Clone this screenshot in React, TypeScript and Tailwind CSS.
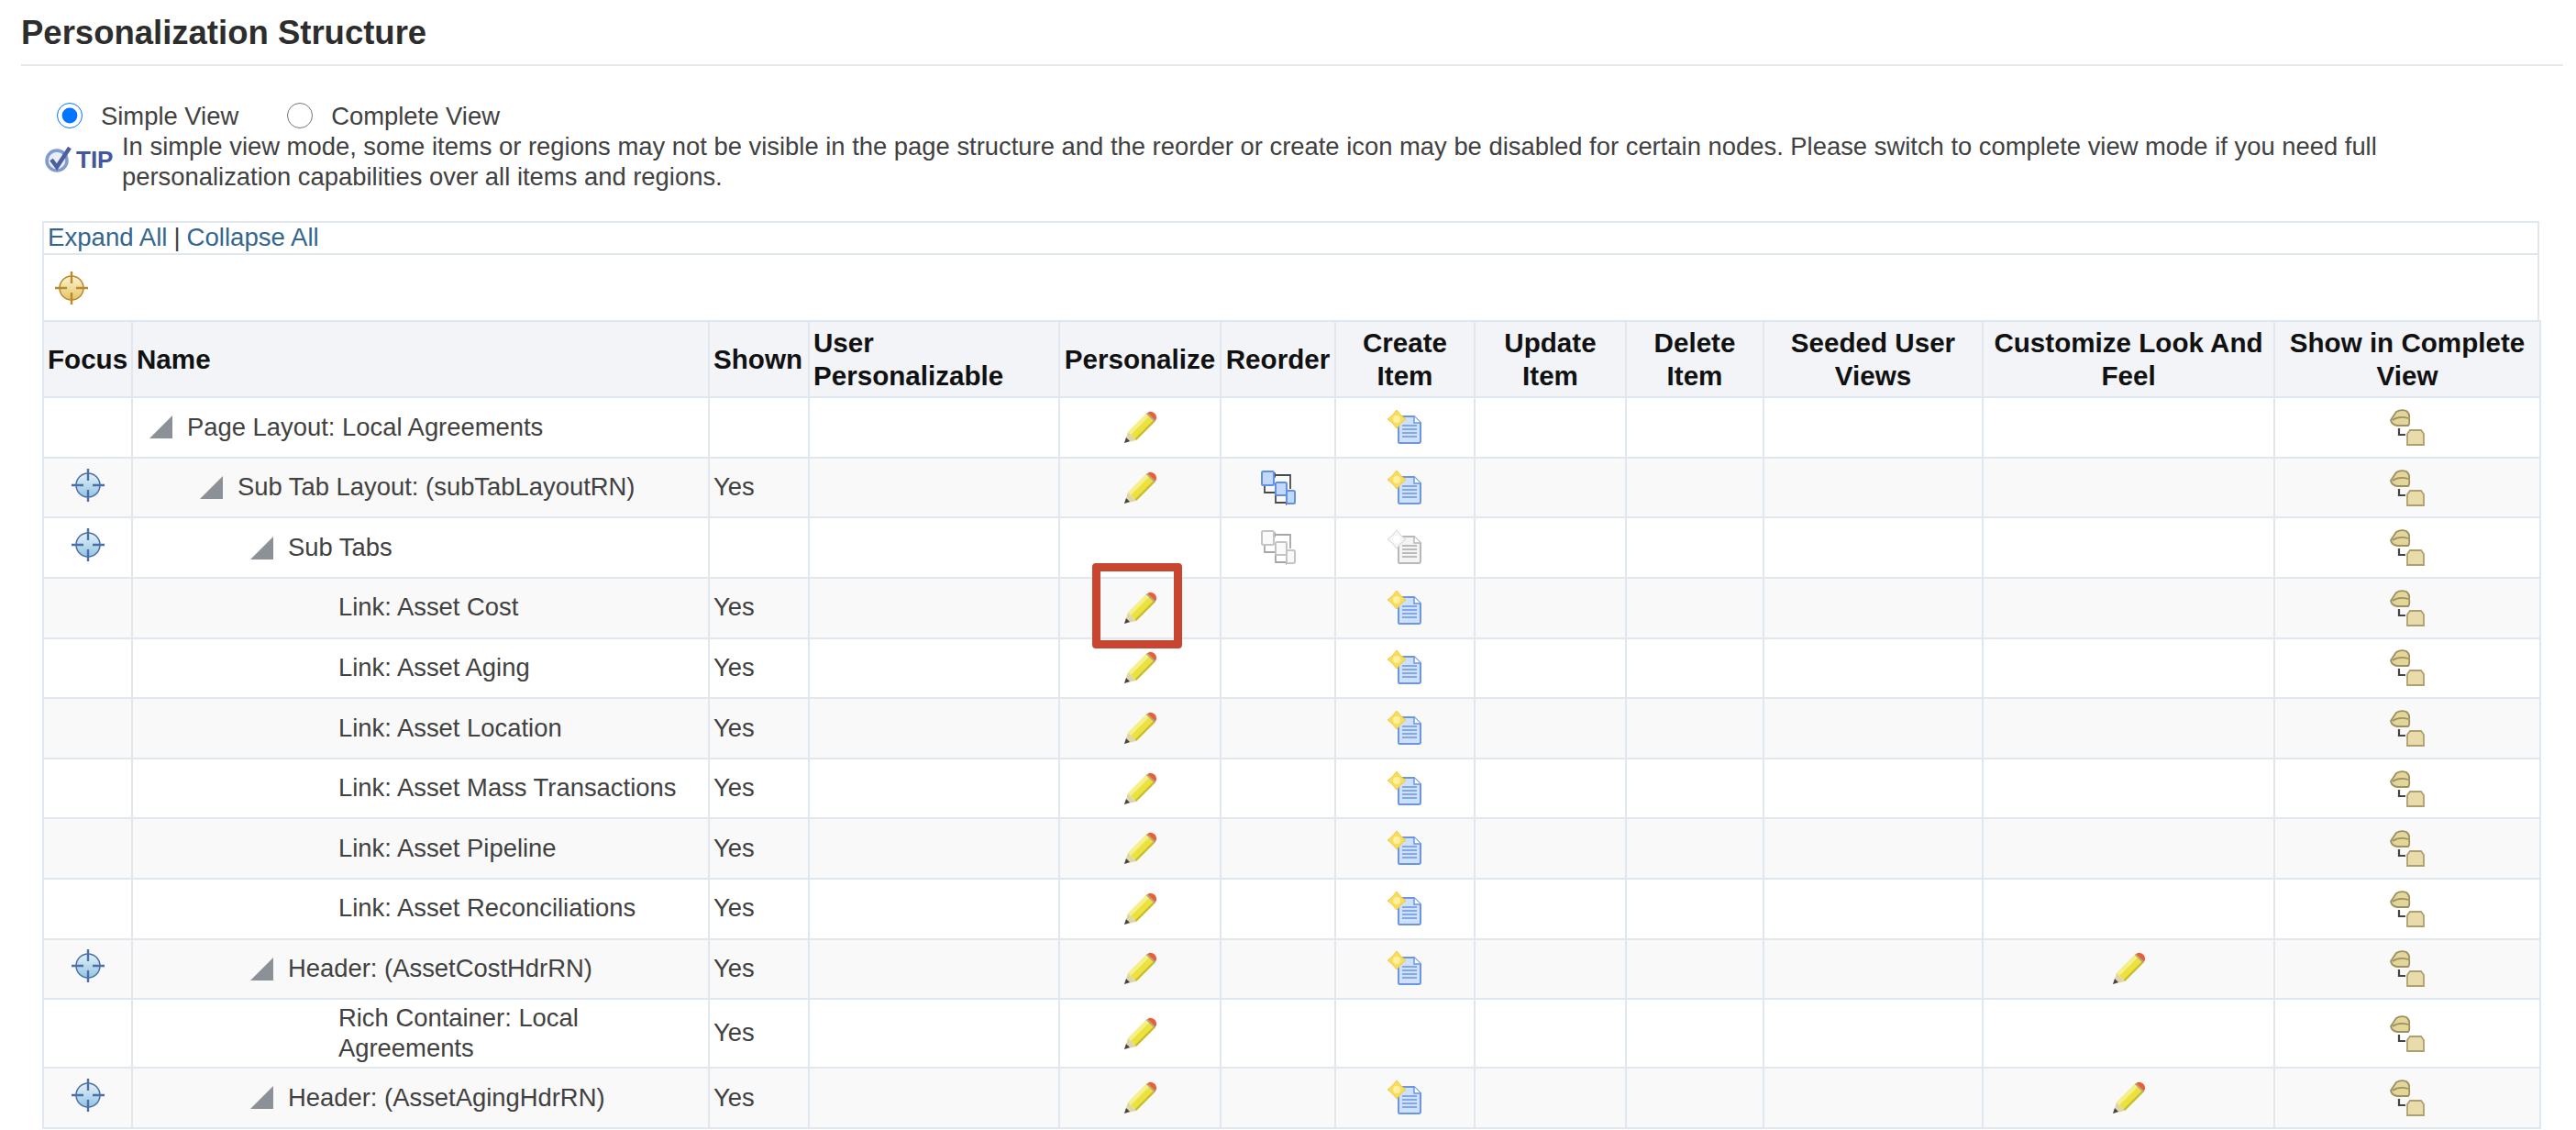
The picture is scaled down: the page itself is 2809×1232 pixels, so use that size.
const rows = [
  { name: "Page Layout: Local Agreements", level: 0, tree: true, focus: false, shown: "", edit: true, reorder: "", create: "on", look: false },
  { name: "Sub Tab Layout: (subTabLayoutRN)", level: 1, tree: true, focus: true, shown: "Yes", edit: true, reorder: "on", create: "on", look: false },
  { name: "Sub Tabs", level: 2, tree: true, focus: true, shown: "", edit: false, reorder: "off", create: "off", look: false },
  { name: "Link: Asset Cost", level: 3, tree: false, focus: false, shown: "Yes", edit: true, reorder: "", create: "on", look: false, marked: true },
  { name: "Link: Asset Aging", level: 3, tree: false, focus: false, shown: "Yes", edit: true, reorder: "", create: "on", look: false },
  { name: "Link: Asset Location", level: 3, tree: false, focus: false, shown: "Yes", edit: true, reorder: "", create: "on", look: false },
  { name: "Link: Asset Mass Transactions", level: 3, tree: false, focus: false, shown: "Yes", edit: true, reorder: "", create: "on", look: false },
  { name: "Link: Asset Pipeline", level: 3, tree: false, focus: false, shown: "Yes", edit: true, reorder: "", create: "on", look: false },
  { name: "Link: Asset Reconciliations", level: 3, tree: false, focus: false, shown: "Yes", edit: true, reorder: "", create: "on", look: false },
  { name: "Header: (AssetCostHdrRN)", level: 2, tree: true, focus: true, shown: "Yes", edit: true, reorder: "", create: "on", look: true },
  { name: "Rich Container: Local Agreements", level: 3, tree: false, focus: false, shown: "Yes", edit: true, reorder: "", create: "", look: false },
  { name: "Header: (AssetAgingHdrRN)", level: 2, tree: true, focus: true, shown: "Yes", edit: true, reorder: "", create: "on", look: true },
];

const indent = ["pl-[18px]", "pl-[73px]", "pl-[128px]", "pl-[183px]"];

function Pencil() {
  return (
    <svg width="37" height="36" viewBox="0 0 37 36" className="inline-block">
      <path d="M5 23 L25 3 L34 12 L14 32 Z" fill="#ece23f" />
      <path d="M5 23 L25 3 L28 6 L8 26 Z" fill="#f6f08a" />
      <path d="M14 32 L34 12 L32.500 10.500 L12.500 30.500 Z" fill="#c6ba30" />
      <path d="M5 23 L14 32 L1 35 Z" fill="#ded6a8" />
      <path d="M3 29 L7 33 L1 35 Z" fill="#444" />
      <path d="M25 3 L28 1 Q31 0 34.500 3 Q37 6.500 35.500 9.500 L34 12 Z" fill="#ea5f38" />
      <path d="M25 3 L34 12 L35 10.500 L26.500 2 Z" fill="#b3ab82" />
    </svg>
  );
}

function Create({ off = false }: { off?: boolean }) {
  const sheet = off ? "#f4f4f4" : "#cfe0fa";
  const edge = off ? "#b8b8b8" : "#6a97e0";
  const line = off ? "#a8a8a8" : "#6a97e0";
  return (
    <svg width="38" height="38" viewBox="0 0 38 38" className="inline-block">
      <path d="M12 7 H29 L36 14 V34 Q36 36 34 36 H13 Q12 36 12 34 Z" fill={sheet} stroke={edge} strokeWidth="2" />
      <path d="M29 7 V14 H36" fill="#fff" stroke={edge} strokeWidth="1.500" />
      <path d="M16 17 H32 M16 21 H32 M16 25 H32 M16 29 H32" stroke={line} strokeWidth="1.600" />
      <path d="M10 0 L15 6 L20 10 L15 14 L10 20 L5 14 L0 10 L5 6 Z" fill={off ? "#f6f6f6" : "#f8dc5a"} stroke={off ? "#d4d4d4" : "#f3cb3c"} />
      <circle cx="10" cy="10" r="4" fill={off ? "#fff" : "#fdf0a0"} />
    </svg>
  );
}

function Reorder({ off = false }: { off?: boolean }) {
  const fill = off ? "#fafafa" : "#c3d8fa";
  const edge = off ? "#c4c4c4" : "#5f92e2";
  const wire = off ? "#a6a6a6" : "#4a4a4a";
  return (
    <svg width="38" height="38" viewBox="0 0 38 38" className="inline-block">
      <path d="M16 5 H32 V20 M4 17 V24 H15 M16 24 V35 H27" fill="none" stroke={wire} strokeWidth="1.800" />
      <path d="M16 2 V8 L12 5 Z M15 21 V27 L19 24 Z M27 32 V38 L31 35 Z" fill={wire} />
      <rect x="1" y="1" width="13" height="15" rx="1.500" fill={fill} stroke={edge} strokeWidth="2" />
      <rect x="16" y="13" width="12" height="14" rx="1.500" fill={fill} stroke={edge} strokeWidth="2" />
      <rect x="28" y="22" width="9" height="14" rx="1.500" fill={fill} stroke={edge} strokeWidth="2" />
    </svg>
  );
}

function ShowIcon() {
  return (
    <svg width="38" height="40" viewBox="0 0 38 40" className="inline-block">
      <path d="M1 12 L7 3 Q12 0 18 2 Q22 5 21 10 Q22 16 20 18 H8 Q2 17 1 12 Z" fill="#e3d69a" stroke="#9e9060" strokeWidth="1.800" />
      <path d="M3 12 Q10 7 20 10" fill="none" stroke="#9e9060" strokeWidth="1.800" />
      <path d="M10 21 V28 H17" fill="none" stroke="#444" strokeWidth="2.200" />
      <path d="M19 27 L22 23 H34 L37 27 V39 H19 Z" fill="#e9dcaa" stroke="#ad9f70" strokeWidth="1.800" />
    </svg>
  );
}

function Target({ gold = false }: { gold?: boolean }) {
  const stroke = gold ? "#b9892c" : "#4c6fa8";
  const top = gold ? "#fbf3d0" : "#e4f1f8";
  const bottom = gold ? "#e6c468" : "#94c4e2";
  const id = gold ? "targetGold" : "targetBlue";
  return (
    <svg width="36" height="36" viewBox="0 0 36 36" className="inline-block">
      <defs>
        <linearGradient id={id} x1="0" y1="0" x2="0" y2="1">
          <stop offset="0" stopColor={top} />
          <stop offset="1" stopColor={bottom} />
        </linearGradient>
      </defs>
      <circle cx="18" cy="18" r="13" fill={`url(#${id})`} stroke={stroke} strokeWidth="1.500" />
      <path d="M18 0 V13 M18 23 V36 M0 18 H13 M23 18 H36" stroke={stroke} strokeWidth="2.400" />
    </svg>
  );
}

function Triangle() {
  return (
    <svg width="25" height="25" viewBox="0 0 25 25" className="shrink-0">
      <path d="M25 0 V25 H0 Z" fill="#8b9196" />
    </svg>
  );
}

function TipIcon() {
  return (
    <svg width="32" height="30" viewBox="0 0 32 30" className="shrink-0">
      <circle cx="13" cy="16" r="11" fill="#e9eef8" stroke="#7f9bd2" strokeWidth="3.500" />
      <path d="M7 15 L13 23 L27 2" fill="none" stroke="#4a5f9c" strokeWidth="4.500" />
    </svg>
  );
}

const th = "border-2 border-[#e0e7ef] bg-[#f2f4f8] px-[4px] text-[29.6px] font-bold text-[#111]";
const td = "border-2 border-[#e0e7ef] p-0 text-center align-middle";

export default function App() {
  return (
    <div className="h-[1232px] overflow-hidden bg-white font-['Liberation_Sans',Arial,sans-serif] text-[27.4px] leading-[32.6px] text-[#414141]">
      <div className="ml-[23px] mr-[14px] h-[72px] border-b-2 border-[#e3e8ee] pt-[15px]">
        <h1 className="text-[36.5px] leading-[42px] font-bold text-[#2d2d2d]">Personalization Structure</h1>
      </div>

      <div className="mt-[36px] ml-[62px] flex h-[36px] items-center">
        <input type="radio" name="view" defaultChecked className="m-0 h-[28px] w-[28px]" />
        <span className="mt-[3px] ml-[20px]">Simple View</span>
        <input type="radio" name="view" className="ml-[53px] h-[28px] w-[28px]" />
        <span className="mt-[3px] ml-[20px]">Complete View</span>
      </div>

      <div className="flex">
        <div className="mt-[14px] ml-[49px] flex h-[32px] w-[84px] items-center">
          <TipIcon />
          <span className="ml-[2px] text-[26px] font-bold text-[#41589f]">TIP</span>
        </div>
        <p className="w-[2640px]">
          In simple view mode, some items or regions may not be visible in the page structure and the reorder or create icon may be disabled for certain nodes. Please switch to complete view mode if you need full personalization capabilities over all items and regions.
        </p>
      </div>

      <div className="mt-[32px] ml-[46px] w-[2723px]">
        <div className="flex h-[37px] items-center border-2 border-[#e0e7ef] pl-[4px]">
          <a className="text-[27.6px] text-[#33678f]">Expand All</a>
          <span className="mx-[7px]">|</span>
          <a className="text-[27.6px] text-[#33678f]">Collapse All</a>
        </div>
        <div className="flex h-[71px] items-center border-x-2 border-[#e0e7ef] pl-[12px]">
          <Target gold />
        </div>
        <table className="w-[2723px] table-fixed border-collapse">
          <colgroup>
            <col className="w-[97px]" />
            <col className="w-[629px]" />
            <col className="w-[109px]" />
            <col className="w-[273px]" />
            <col className="w-[176px]" />
            <col className="w-[125px]" />
            <col className="w-[152px]" />
            <col className="w-[165px]" />
            <col className="w-[150px]" />
            <col className="w-[239px]" />
            <col className="w-[318px]" />
            <col className="w-[290px]" />
          </colgroup>
          <thead>
            <tr className="h-[83px] leading-[36px]">
              <th className={`${th} text-left`}>Focus</th>
              <th className={`${th} text-left`}>Name</th>
              <th className={`${th} text-left`}>Shown</th>
              <th className={`${th} text-left`}>User Personalizable</th>
              <th className={`${th} text-center`}>Personalize</th>
              <th className={`${th} text-center`}>Reorder</th>
              <th className={`${th} text-center`}>Create Item</th>
              <th className={`${th} text-center`}>Update Item</th>
              <th className={`${th} text-center`}>Delete Item</th>
              <th className={`${th} text-center`}>Seeded User Views</th>
              <th className={`${th} text-center`}>Customize Look And Feel</th>
              <th className={`${th} text-center`}>Show in Complete View</th>
            </tr>
          </thead>
          <tbody>
            {rows.map((row, i) => (
              <tr key={row.name} className={`${i === 10 ? "h-[75px]" : "h-[65.6px]"} ${i % 2 === 1 ? "bg-[#f9f9f9]" : "bg-white"}`}>
                <td className={td}>{row.focus && <div className="mb-[6px] flex justify-center"><Target /></div>}</td>
                <td className={`${td} ${indent[row.level]} text-left`}>
                  <div className="flex items-center">
                    {row.tree ? <Triangle /> : <span className="w-[25px] shrink-0" />}
                    <span className="ml-[16px]">{row.name}</span>
                  </div>
                </td>
                <td className={`${td} pl-[4px] text-left`}>{row.shown}</td>
                <td className={td}></td>
                <td className={td}>
                  {row.edit && (
                    <div className="relative flex justify-center">
                      <Pencil />
                      {row.marked && <div className="absolute top-[-31px] left-[35px] h-[93px] w-[98px] rounded-[4px] border-[9px] border-[#c8462f]" />}
                    </div>
                  )}
                </td>
                <td className={td}>
                  {row.reorder && <div className="flex justify-center"><Reorder off={row.reorder === "off"} /></div>}
                </td>
                <td className={td}>
                  {row.create && <div className="flex justify-center"><Create off={row.create === "off"} /></div>}
                </td>
                <td className={td}></td>
                <td className={td}></td>
                <td className={td}></td>
                <td className={td}>{row.look && <div className="flex justify-center"><Pencil /></div>}</td>
                <td className={td}><div className="flex justify-center"><ShowIcon /></div></td>
              </tr>
            ))}
          </tbody>
        </table>
      </div>
    </div>
  );
}
